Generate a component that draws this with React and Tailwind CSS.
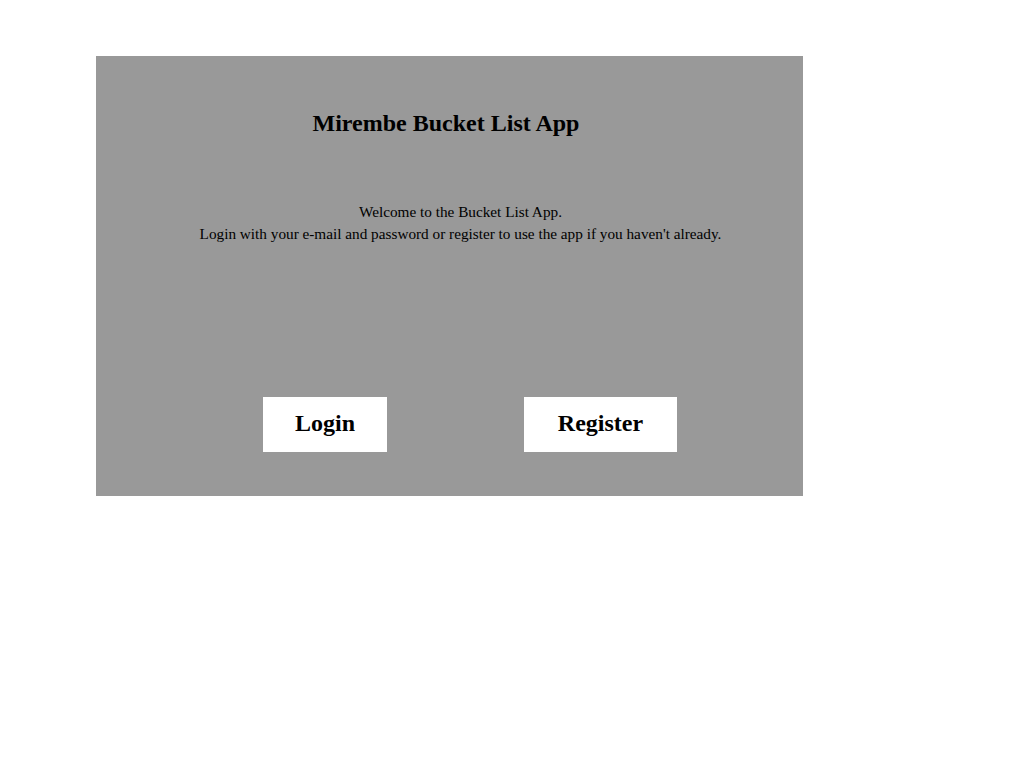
export default function App() {
  return (
    <div className="min-h-screen bg-white" style={{ fontFamily: '"Liberation Serif", "Times New Roman", serif' }}>
      <div className="ml-[96px] pt-[56px]">
        <div className="w-[707px] h-[440px] bg-[#999999] flex flex-col text-black">
          <h1 className="mt-[53px] pr-[7px] text-center text-[24px] leading-[28px] font-bold">
            Mirembe Bucket List App
          </h1>
          <div className="mt-[64px] pl-[22px] text-center text-[15.25px] leading-[22px]">
            <p>Welcome to the Bucket List App.</p>
            <p>Login with your e-mail and password or register to use the app if you haven't already.</p>
          </div>
          <div className="mt-[152px] pl-[167px] flex gap-[137px]">
            <button className="w-[124px] h-[55px] pb-[4px] bg-white text-[24px] font-bold flex items-center justify-center">
              Login
            </button>
            <button className="w-[153px] h-[55px] pb-[4px] bg-white text-[24px] font-bold flex items-center justify-center">
              Register
            </button>
          </div>
        </div>
      </div>
    </div>
  );
}
